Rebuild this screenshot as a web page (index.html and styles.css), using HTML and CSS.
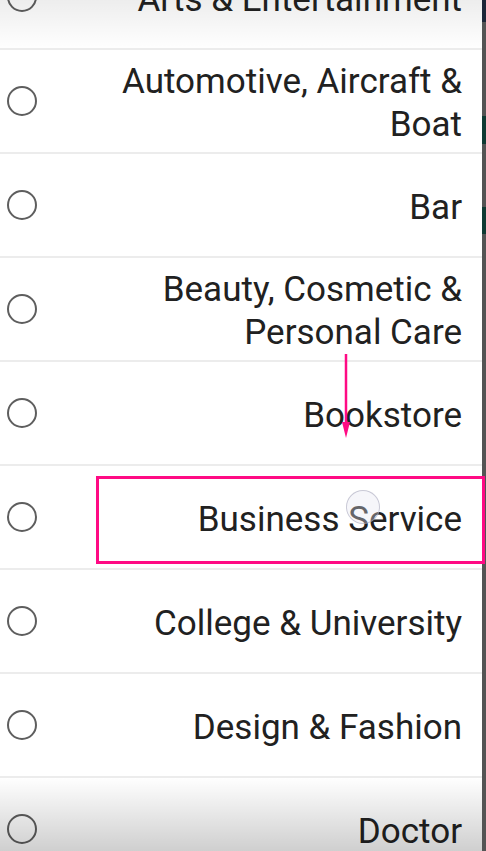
FILE: index.html
```html
<!DOCTYPE html>
<html>
<head>
<meta charset="utf-8">
<link rel="stylesheet" href="styles.css">
</head>
<body>
<div class="screen">
  <div class="list">
    <div class="row"><span class="radio"></span><span class="label">Arts &amp; Entertainment</span></div>
    <div class="row"><span class="radio"></span><span class="label">Automotive, Aircraft &amp;<br>Boat</span></div>
    <div class="row"><span class="radio"></span><span class="label">Bar</span></div>
    <div class="row"><span class="radio"></span><span class="label">Beauty, Cosmetic &amp;<br>Personal Care</span></div>
    <div class="row"><span class="radio"></span><span class="label">Bookstore</span></div>
    <div class="row"><span class="radio"></span><span class="label">Business Service</span></div>
    <div class="row"><span class="radio"></span><span class="label">College &amp; University</span></div>
    <div class="row"><span class="radio"></span><span class="label">Design &amp; Fashion</span></div>
    <div class="row"><span class="radio"></span><span class="label">Doctor</span></div>
  </div>
  <div class="edge"></div>

  <div class="fade-top"></div>
  <div class="fade-bottom"></div>
  <div class="highlight"></div>
  <div class="touch"></div>
  <svg class="arrow" width="16" height="90" viewBox="0 0 16 90">
    <line x1="8" y1="0" x2="8" y2="76" stroke="#ff0a84" stroke-width="2.5"/>
    <polygon points="4,68 12,68 8,84" fill="#ff0a84"/>
  </svg>
</div>
</body>
</html>
```

FILE: styles.css
```css
html, body {
  margin: 0;
  padding: 0;
  background: #ffffff;
}

.screen {
  position: relative;
  width: 486px;
  height: 851px;
  overflow: hidden;
  display: flex;
  font-family: Roboto, "Noto Sans", sans-serif;
}

.list {
  flex: 1;
  margin-top: -54px;
  background: #ffffff;
}

.row {
  display: flex;
  align-items: center;
  height: 102px;
  border-bottom: 2px solid #ececec;
}

.radio {
  flex: none;
  width: 26px;
  height: 26px;
  margin-left: 7px;
  border: 2.5px solid #5e5e5e;
  border-radius: 50%;
}

.label {
  flex: 1;
  text-align: right;
  padding-right: 20px;
  padding-top: 4px;
  font-size: 35px;
  line-height: 43px;
  color: #212121;
}

.edge {
  flex: none;
  width: 4px;
  background: linear-gradient(to bottom,
    #1c2638 0px, #1c2638 22px,
    #545454 22px, #545454 116px,
    #0f3a33 116px, #0f3a33 144px,
    #545454 144px, #545454 207px,
    #0f3a33 207px, #0f3a33 234px,
    #545454 234px);
}

.fade-top {
  position: absolute;
  left: 0;
  top: 0;
  width: 482px;
  height: 50px;
  background: linear-gradient(to bottom, rgba(0,0,0,0.07), rgba(0,0,0,0));
  pointer-events: none;
}

.fade-bottom {
  position: absolute;
  left: 0;
  bottom: 0;
  width: 482px;
  height: 74px;
  background: linear-gradient(to bottom, rgba(0,0,0,0), rgba(0,0,0,0.19));
  pointer-events: none;
}

.highlight {
  position: absolute;
  left: 96px;
  top: 476px;
  width: 383px;
  height: 82px;
  border: 3px solid #ff0a84;
}

.touch {
  position: absolute;
  left: 346px;
  top: 490px;
  width: 32px;
  height: 32px;
  border: 1.5px solid rgba(170,170,190,0.6);
  border-radius: 50%;
  background: rgba(230,230,240,0.35);
}

.arrow {
  position: absolute;
  left: 338px;
  top: 354px;
}
```
